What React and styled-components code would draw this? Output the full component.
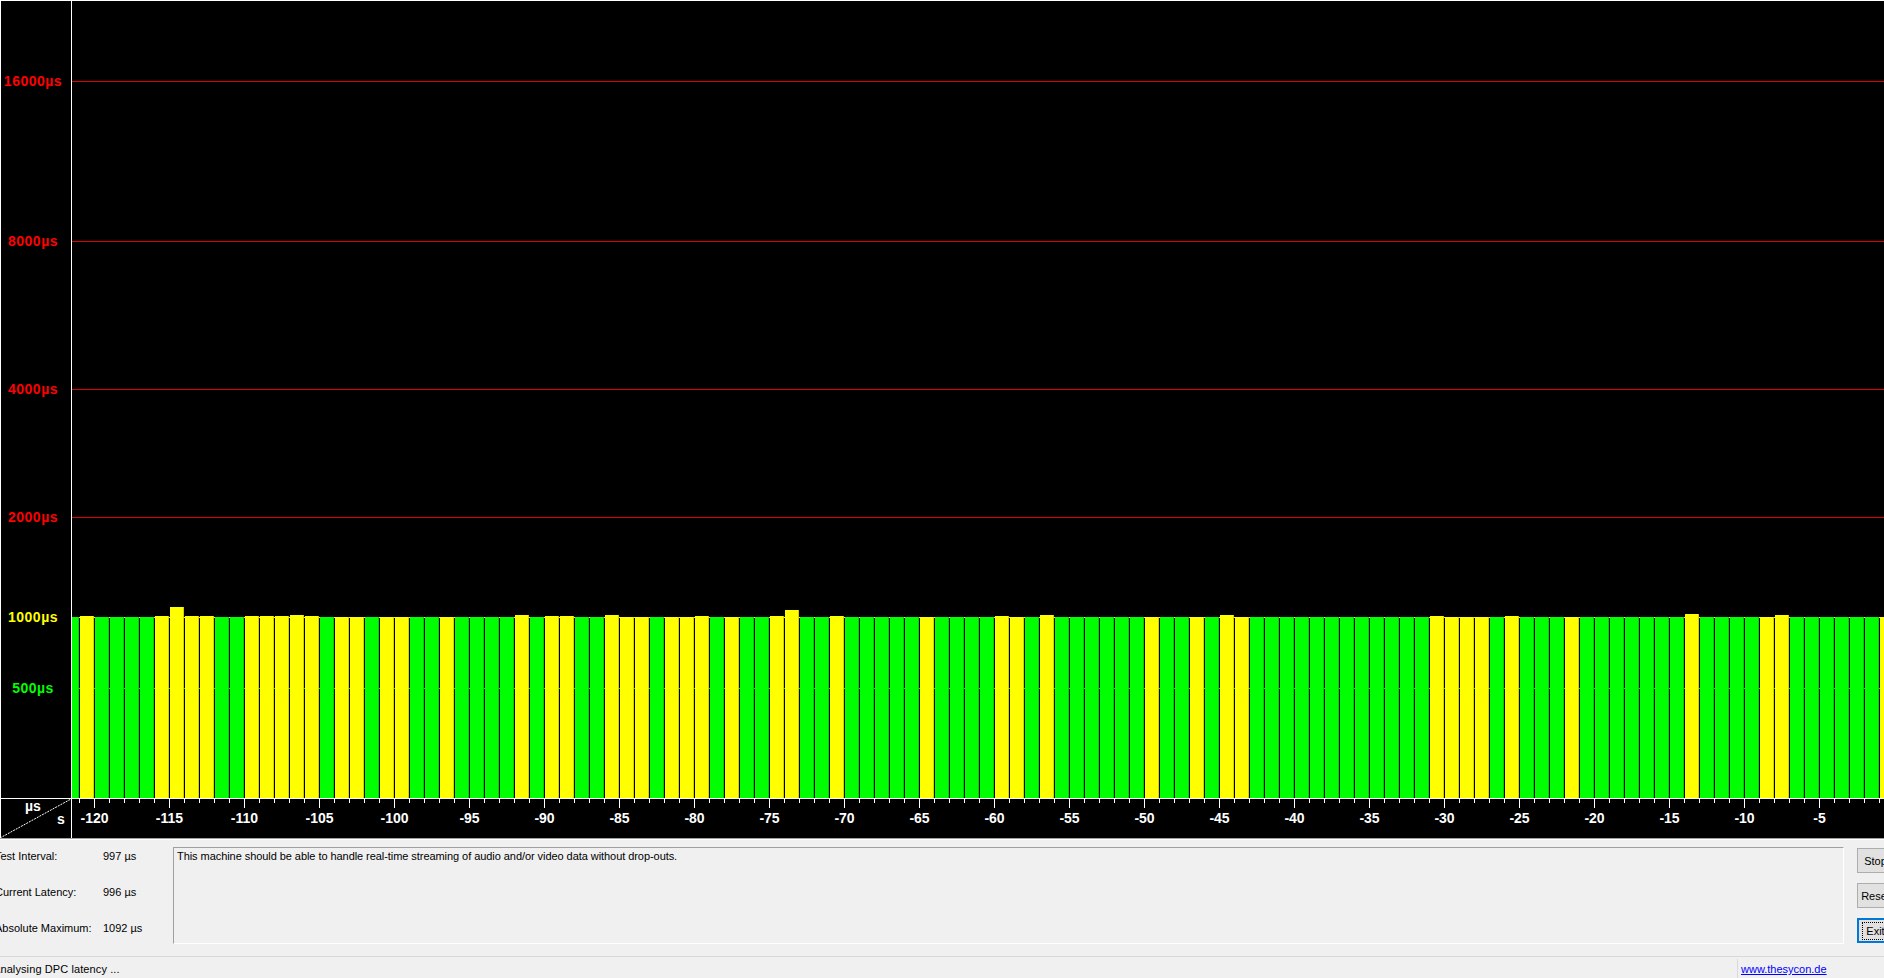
import React from "react";
import styled, { createGlobalStyle } from "styled-components";

const GlobalStyle = createGlobalStyle`
  html, body {
    margin: 0;
    padding: 0;
    overflow: hidden;
    background: #f0f0f0;
  }
  body {
    font-family: "Liberation Sans", Arial, sans-serif;
  }
`;

// colour of each one-second bar, oldest first (bar 0 is the cut-off one at the axis)
const PATTERN =
  "gyggggyyyy" + "ggyyyyygyy" + "gyyggygggg" + "ygyyggyyyg" +
  "yyygyggyyg" + "gygggggygg" + "ggyygygggg" + "ggyggygyyg" +
  "gggggggggg" + "gyyyygyggg" + "ygggggggyg" + "gggyyggggg" + "gy";

// bars that stick out a little above the 1000µs line
const TOPS = {
  1: 616, 6: 616, 7: 607, 8: 616, 9: 616, 12: 616, 13: 616, 14: 616, 15: 615,
  16: 616, 30: 615, 32: 616, 33: 616, 36: 615, 42: 616, 47: 616, 48: 610,
  51: 616, 62: 616, 65: 615, 77: 615, 91: 616, 96: 616, 108: 614, 114: 615,
};

const BARS = PATTERN.split("").map((c, i) => ({
  x: i === 0 ? 72 : 80 + 15 * (i - 1),
  w: i === 0 ? 7 : 14,
  top: TOPS[i] || 617,
  fill: c === "y" ? "#ffff00" : "#00ff00",
  edge: c === "y" ? "#d2d200" : "#00d200",
}));

const GRID = [
  { label: "16000µs", y: 81, color: "#ff0000", line: "#e00000" },
  { label: "8000µs", y: 241, color: "#ff0000", line: "#e00000" },
  { label: "4000µs", y: 389, color: "#ff0000", line: "#e00000" },
  { label: "2000µs", y: 517, color: "#ff0000", line: "#e00000" },
  { label: "1000µs", y: 617, color: "#ffff00", line: "#ffff00" },
  { label: "500µs", y: 688, color: "#00ff00", line: "#00ff00" },
];

const AXIS_Y = 798;
const TICKS = Array.from({ length: 121 }, (_, j) => ({
  x: 79 + 15 * j + 0.5,
  sec: 121 - j,
  major: (121 - j) % 5 === 0,
}));

export default function App() {
  return (
    <>
      <GlobalStyle />
      <Window>
        <ChartPanel>
          <LatencyChart />
        </ChartPanel>
        <InfoPanel>
          <Stats>
            <StatLabel>Test Interval:</StatLabel>
            <StatValue>997 µs</StatValue>
            <StatLabel>Current Latency:</StatLabel>
            <StatValue>996 µs</StatValue>
            <StatLabel>Absolute Maximum:</StatLabel>
            <StatValue>1092 µs</StatValue>
          </Stats>
          <MessageBox>
            This machine should be able to handle real-time streaming of audio and/or video data without drop-outs.
          </MessageBox>
          <Buttons>
            <Button>Stop</Button>
            <Button>Reset</Button>
            <Button $default>
              <span>Exit</span>
            </Button>
          </Buttons>
        </InfoPanel>
        <StatusBar>
          <StatusText>Analysing DPC latency ...</StatusText>
          <StatusLink>
            <a href="#">www.thesycon.de</a>
          </StatusLink>
        </StatusBar>
      </Window>
    </>
  );
}

function LatencyChart() {
  return (
    <svg width="1884" height="838" viewBox="0 0 1884 838" shapeRendering="crispEdges">
      <rect width="1884" height="838" fill="#000" />
      {GRID.map((g) => (
        <line key={g.label} x1="71" x2="1884" y1={g.y + 0.5} y2={g.y + 0.5} stroke={g.line} />
      ))}
      {BARS.map((b, i) => (
        <g key={i}>
          <rect x={b.x} y={b.top} width={b.w} height={AXIS_Y - b.top} fill={b.fill} />
          <rect x={b.x + b.w - 1} y={b.top} width="1" height={AXIS_Y - b.top} fill={b.edge} />
        </g>
      ))}
      <line x1="0" x2="1884" y1="0.5" y2="0.5" stroke="#fff" />
      <line x1="0.5" x2="0.5" y1="0" y2="838" stroke="#fff" />
      <line x1="71.5" x2="71.5" y1="0" y2="838" stroke="#fff" />
      <line x1="0" x2="1884" y1={AXIS_Y + 0.5} y2={AXIS_Y + 0.5} stroke="#fff" />
      {TICKS.map((t) => (
        <line key={t.sec} x1={t.x} x2={t.x} y1={AXIS_Y} y2={t.major ? 808 : 803} stroke="#fff" />
      ))}
      <g fontFamily="'Liberation Sans', Arial, sans-serif" fontWeight="bold" fontSize="14">
        {GRID.map((g) => (
          <text key={g.label} x="33" y={g.y + 5} fill={g.color} textAnchor="middle" letterSpacing="0.5">
            {g.label}
          </text>
        ))}
        {TICKS.filter((t) => t.major).map((t) => (
          <text key={t.sec} x={t.x} y="823" fill="#fff" textAnchor="middle">
            -{t.sec}
          </text>
        ))}
        <text x="25" y="811" fill="#fff">µs</text>
        <text x="57" y="824" fill="#fff">s</text>
      </g>
      <line x1="0" y1="838" x2="71" y2="799" stroke="#fff" strokeDasharray="2 1" shapeRendering="auto" />
    </svg>
  );
}

const Window = styled.div`
  width: 1884px;
  height: 978px;
  display: flex;
  flex-direction: column;
  overflow: hidden;
  background: #f0f0f0;
  color: #000;
  font-size: 11px;
`;

const ChartPanel = styled.div`
  flex: none;
  height: 838px;
  line-height: 0;
  background: #000;
  border-bottom: 1px solid #a0a0a0;
`;

const InfoPanel = styled.div`
  flex: none;
  box-sizing: border-box;
  height: 117px;
  border-top: 1px solid #fff;
  padding-top: 7px;
  display: flex;
  align-items: flex-start;
`;

const Stats = styled.div`
  flex: none;
  width: 178px;
  margin-left: -5px;
  padding-top: 2px;
  display: grid;
  grid-template-columns: 108px 1fr;
  grid-auto-rows: 14px;
  row-gap: 22px;
  line-height: 14px;
`;

const StatLabel = styled.div`
  white-space: nowrap;
`;

const StatValue = styled.div`
  white-space: nowrap;
`;

const MessageBox = styled.div`
  flex: none;
  box-sizing: border-box;
  width: 1671px;
  height: 97px;
  padding: 1px 3px;
  line-height: 14px;
  letter-spacing: -0.06px;
  border-top: 1px solid #a0a0a0;
  border-left: 1px solid #a0a0a0;
  border-right: 1px solid #fff;
  border-bottom: 1px solid #fff;
`;

const Buttons = styled.div`
  flex: none;
  margin-left: 13px;
  margin-top: 1px;
  display: flex;
  flex-direction: column;
  gap: 10px;
`;

const Button = styled.button`
  box-sizing: border-box;
  width: 37px;
  height: 25px;
  padding: 0;
  font-family: inherit;
  font-size: 11px;
  color: #000;
  background: #e1e1e1;
  border: ${(p) => (p.$default ? "2px solid #0078d7" : "1px solid #adadad")};
  display: flex;
  align-items: center;
  justify-content: center;

  span {
    padding: 2px 3px;
    outline: 1px dotted #000;
  }
`;

const StatusBar = styled.div`
  flex: 1;
  box-sizing: border-box;
  border-top: 1px solid #d9d9d9;
  display: flex;
  align-items: stretch;
  line-height: 14px;
`;

const StatusText = styled.div`
  flex: 1;
  margin-left: -7px;
  padding-top: 5px;
  white-space: nowrap;
  letter-spacing: 0.1px;
`;

const StatusLink = styled.div`
  flex: none;
  width: 143px;
  margin-top: 2px;
  padding: 3px 0 0 3px;
  border-left: 1px solid #d9d9d9;

  a {
    color: #0000ff;
    text-decoration: underline;
  }
`;
